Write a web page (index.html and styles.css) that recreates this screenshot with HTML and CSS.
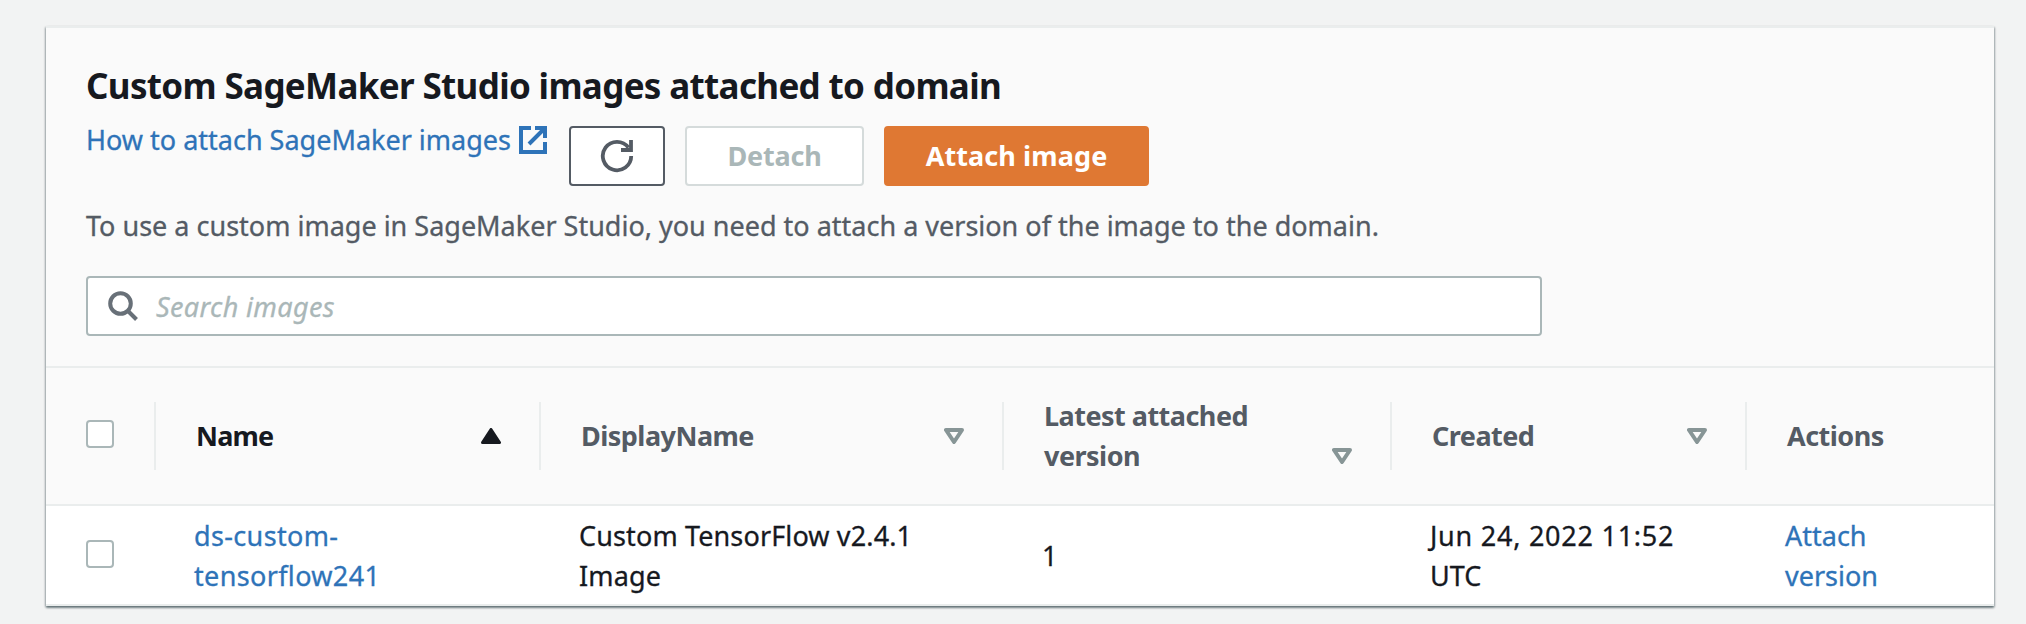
FILE: index.html
```
<!DOCTYPE html>
<html lang="en">
<head>
<meta charset="utf-8">
<title>Custom SageMaker Studio images</title>
<link rel="stylesheet" href="styles.css">
</head>
<body>
<main class="card">
  <header class="card-header">
    <h2 class="title">Custom SageMaker Studio images attached to domain</h2>
    <div class="toolbar">
      <a class="link help-link"><span class="help-text">How to attach SageMaker images</span><svg class="external-icon" width="28" height="28" viewBox="0 0 28 28"><path d="M12 2H2v24h24V16M16 2h10v10M25 3L10 18" fill="none" stroke="currentColor" stroke-width="4"/></svg></a>
      <button class="btn btn-icon" aria-label="Refresh"><svg width="34" height="34" viewBox="0 0 34 34"><path d="M31.200 17A14.200 14.200 0 1 1 28.500 8.700M31 1v10H21" fill="none" stroke="currentColor" stroke-width="3.800"/></svg></button>
      <button class="btn btn-disabled" disabled>Detach</button>
      <button class="btn btn-primary">Attach image</button>
    </div>
    <p class="description">To use a custom image in SageMaker Studio, you need to attach a version of the image to the domain.</p>
    <div class="search">
      <svg width="31" height="31" viewBox="0 0 31 31"><circle cx="12.500" cy="12.500" r="10.300" fill="none" stroke="currentColor" stroke-width="4"/><path d="M19.500 19.500L28.500 28.500" stroke="currentColor" stroke-width="4"/></svg>
      <span class="placeholder">Search images</span>
    </div>
  </header>
  <section class="grid grid-head">
    <div class="th th-check"><span class="checkbox"></span></div>
    <div class="th th-sorted"><span>Name</span><svg class="sort" width="20" height="16" viewBox="0 0 20 16"><path d="M10 1.500L18.500 14.500H1.500Z" fill="currentColor" stroke="currentColor" stroke-width="3" stroke-linejoin="round"/></svg></div>
    <div class="th"><span>DisplayName</span><svg class="sort" width="20" height="16" viewBox="0 0 20 16"><path d="M2 2H18L10 14Z" fill="none" stroke="currentColor" stroke-width="4" stroke-linejoin="round"/></svg></div>
    <div class="th"><span>Latest attached<br>version</span><svg class="sort sort-low" width="20" height="16" viewBox="0 0 20 16"><path d="M2 2H18L10 14Z" fill="none" stroke="currentColor" stroke-width="4" stroke-linejoin="round"/></svg></div>
    <div class="th"><span>Created</span><svg class="sort" width="20" height="16" viewBox="0 0 20 16"><path d="M2 2H18L10 14Z" fill="none" stroke="currentColor" stroke-width="4" stroke-linejoin="round"/></svg></div>
    <div class="th th-last"><span>Actions</span></div>
  </section>
  <section class="grid grid-row">
    <div class="td td-check"><span class="checkbox"></span></div>
    <div class="td"><a class="link name-link">ds-custom-<br>tensorflow241</a></div>
    <div class="td"><span class="display-name">Custom TensorFlow v2.4.1<br>Image</span></div>
    <div class="td"><span>1</span></div>
    <div class="td"><span><span class="date">Jun 24, 2022 11:52</span><br>UTC</span></div>
    <div class="td"><a class="link">Attach<br>version</a></div>
  </section>
</main>
</body>
</html>
```
FILE: styles.css
```
* { box-sizing: border-box; }

body {
  margin: 0;
  padding: 26px 32px 18px 46px;
  height: 624px;
  background: #f2f3f3;
  color: #16191f;
  font: 27px/40px "Noto Sans", "Open Sans", sans-serif;
}

.card {
  height: 580px;
  border-top: 2px solid #eaeded;
  border-bottom: 2px solid #eaeded;
  background: #fff;
  box-shadow: 0 2px 2px 0 rgba(0, 28, 36, 0.4), 1px 1px 2px 0 rgba(0, 28, 36, 0.22), -1px 1px 2px 0 rgba(0, 28, 36, 0.22);
}

.card-header {
  height: 340px;
  padding: 36px 40px 0;
  background: #fafafa;
  border-bottom: 2px solid #eaeded;
}

.title {
  margin: 0;
  font-size: 35px;
  line-height: 44px;
  letter-spacing: -0.66px;
}

.toolbar {
  display: flex;
  align-items: flex-start;
  margin-top: 18px;
  height: 60px;
}

.link { color: #2e73b8; }

.help-link,
.description,
.td { -webkit-text-stroke: 0.3px currentColor; }

.help-link {
  display: flex;
  width: 483px;
  justify-content: space-between;
  padding-right: 22px;
}

.help-text {
  margin-top: -6px;
  white-space: nowrap;
}

.external-icon { display: block; flex: none; }

.btn {
  height: 60px;
  margin: 0 20px 0 0;
  padding: 0;
  border: 2px solid #545b64;
  border-radius: 4px;
  background: #fff;
  color: #545b64;
  font: bold 27px/40px "Noto Sans", "Open Sans", sans-serif;
}

.btn-icon {
  display: flex;
  align-items: center;
  justify-content: center;
  width: 96px;
}

.btn-disabled {
  width: 179px;
  border-color: #d5dbdb;
  color: #aab7b8;
  letter-spacing: -0.2px;
}

.btn-primary {
  width: 265px;
  border-color: #df7833;
  background: #df7833;
  color: #fff;
  letter-spacing: 0.1px;
}

.description {
  margin: 20px 0 0;
  color: #545b64;
  white-space: nowrap;
}

.search {
  display: flex;
  align-items: center;
  gap: 17px;
  width: 1456px;
  height: 60px;
  margin-top: 30px;
  padding-left: 20px;
  border: 2px solid #aab7b8;
  border-radius: 4px;
  background: #fff;
  color: #687078;
}

.placeholder {
  padding-top: 1px;
  color: #aab7b8;
  font-style: italic;
  letter-spacing: 0.35px;
  -webkit-text-stroke: 0.3px currentColor;
}

.grid {
  display: grid;
  grid-template-columns: 110px 385px 463px 388px 355px 247px;
}

.grid-head {
  height: 138px;
  padding: 34px 0;
  background: #fafafa;
  border-bottom: 2px solid #eaeded;
}

.th {
  display: flex;
  align-items: center;
  justify-content: space-between;
  height: 68px;
  padding: 0 38px 0 40px;
  border-right: 2px solid #eaeded;
  color: #545b64;
  font-weight: bold;
  letter-spacing: -0.52px;
  white-space: nowrap;
}

.sort { flex: none; color: #879596; }
.sort-low { margin-top: 40px; }
.th-last { border-right: 0; }
.th-sorted { color: #16191f; letter-spacing: -0.8px; }
.th-sorted .sort { color: #16191f; }
.th-check { padding: 0 0 4px 40px; }

.grid-row {
  height: 98px;
  align-items: center;
}

.td {
  padding: 2px 0 0 38px;
  white-space: nowrap;
}

.td-check {
  display: flex;
  padding: 0 0 2px 40px;
}

.name-link { letter-spacing: 0.35px; }
.display-name { letter-spacing: 0.13px; }
.date { letter-spacing: 0.75px; }

.checkbox {
  width: 28px;
  height: 28px;
  border: 2px solid #aab7b8;
  border-radius: 4px;
  background: #fff;
}
```
